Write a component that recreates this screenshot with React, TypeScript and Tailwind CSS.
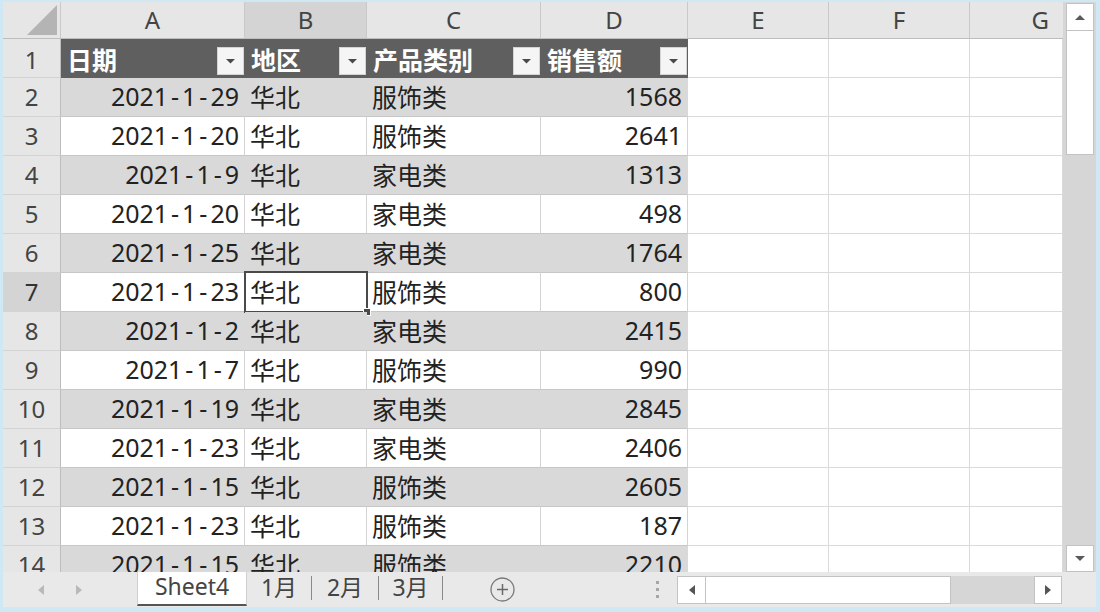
import React from "react";

const rows: [string, string, string, number][] = [
  ["2021-1-29", "华北", "服饰类", 1568],
  ["2021-1-20", "华北", "服饰类", 2641],
  ["2021-1-9", "华北", "家电类", 1313],
  ["2021-1-20", "华北", "家电类", 498],
  ["2021-1-25", "华北", "家电类", 1764],
  ["2021-1-23", "华北", "服饰类", 800],
  ["2021-1-2", "华北", "家电类", 2415],
  ["2021-1-7", "华北", "服饰类", 990],
  ["2021-1-19", "华北", "家电类", 2845],
  ["2021-1-23", "华北", "家电类", 2406],
  ["2021-1-15", "华北", "服饰类", 2605],
  ["2021-1-23", "华北", "服饰类", 187],
  ["2021-1-15", "华北", "服饰类", 2210],
];

function DateText({ s }: { s: string }) {
  const parts = s.split("-");
  return (
    <span className="whitespace-nowrap">
      {parts.map((p, i) => (
        <React.Fragment key={i}>
          {i > 0 && <span className="inline-block w-[14px] text-center">-</span>}
          {p}
        </React.Fragment>
      ))}
    </span>
  );
}

function FilterBtn() {
  return (
    <div className="w-[27px] h-[28px] bg-[#f5f5f5] border border-[#d4d4d4] flex items-center justify-center shrink-0">
      <svg width="11" height="6" viewBox="0 0 11 6">
        <polygon points="1,1 10,1 5.5,5.5" fill="#4a4a4a" />
      </svg>
    </div>
  );
}

function ColHead({ l, sel }: { l: string; sel?: boolean }) {
  return (
    <div
      className={`flex items-center justify-center border-r border-b border-r-[#c9c9c9] border-b-[#bdbdbd] text-[24px] text-[#444] ${
        sel ? "bg-[#d4d4d4]" : "bg-[#e6e6e6]"
      }`}
    >
      {l}
    </div>
  );
}

function RowHead({ n, sel }: { n: number; sel?: boolean }) {
  return (
    <div
      className={`flex items-center justify-center border-r border-b border-r-[#bdbdbd] border-b-[#d3d3d3] text-[24px] pb-[1px] ${
        sel ? "bg-[#d4d4d4] text-[#333]" : "bg-[#e6e6e6] text-[#444]"
      } ${n === 1 ? "pt-[4px]" : ""}`}
    >
      {n}
    </div>
  );
}

function Empty() {
  return <div className="bg-white border-r border-b border-[#dadada]" />;
}

export default function App() {
  return (
    <div className="w-[1100px] h-[612px] bg-[#d0e8f3] pt-[2px] pl-[3px] pr-[4px] pb-[5px] flex flex-col font-['Noto_Sans','Noto_Sans_CJK_SC',sans-serif]">
      {/* grid + vertical scrollbar */}
      <div className="h-[570px] flex">
        <div className="w-[1060px] h-[570px] overflow-hidden">
          <div className="grid grid-cols-[58px_184px_122px_174px_147px_141px_141px_93px] grid-rows-[37px_repeat(14,39px)]">
            {/* corner */}
            <div className="bg-[#e6e6e6] border-r border-b border-r-[#c9c9c9] border-b-[#bdbdbd] relative">
              <svg className="absolute right-[3px] bottom-[3px]" width="30" height="30" viewBox="0 0 30 30">
                <polygon points="30,0 30,30 0,30" fill="#b4b4b4" />
              </svg>
            </div>
            <ColHead l="A" />
            <ColHead l="B" sel />
            <ColHead l="C" />
            <ColHead l="D" />
            <ColHead l="E" />
            <ColHead l="F" />
            <div className="flex items-center justify-end pr-[14px] border-b border-b-[#bdbdbd] bg-[#e6e6e6] text-[24px] text-[#444]">
              G
            </div>

            {/* row 1 table header */}
            <RowHead n={1} />
            {["日期", "地区", "产品类别", "销售额"].map((h) => (
              <div
                key={h}
                className="bg-[#5f5f5f] border-b border-[#5f5f5f] flex items-end justify-between pl-[6px] pr-[1px] pb-[2px]"
              >
                <span className="font-['Noto_Sans_CJK_SC',sans-serif] text-white font-bold text-[25px] leading-none self-center pt-[5px]">
                  {h}
                </span>
                <FilterBtn />
              </div>
            ))}
            <Empty />
            <Empty />
            <Empty />

            {rows.map((r, i) => {
              const n = i + 2;
              const gray = n % 2 === 0;
              const bg = gray ? "bg-[#d9d9d9] border-r-[#d9d9d9]" : "bg-white border-r-[#d3d3d3]";
              const cell = `border-r border-b border-b-[#c6c6c6] ${bg} flex items-center text-[25px] leading-none text-[#222] pb-[2px]`;
              return (
                <React.Fragment key={n}>
                  <RowHead n={n} sel={n === 7} />
                  <div className={`${cell} justify-end pr-[5px]`}>
                    <DateText s={r[0]} />
                  </div>
                  <div className={`${cell} pl-[5px] relative font-['Noto_Sans_CJK_SC',sans-serif]`}>
                    {r[1]}
                    {n === 7 && (
                      <div className="absolute top-[-2px] left-[-1px] right-[-2px] bottom-[-2px] border-2 border-[#4a4a4a]">
                        <div className="absolute right-[-5px] bottom-[-5px] w-[8px] h-[8px] bg-[#4a4a4a] border border-white" />
                      </div>
                    )}
                  </div>
                  <div className={`${cell} pl-[5px] font-['Noto_Sans_CJK_SC',sans-serif]`}>{r[2]}</div>
                  <div className={`${cell} justify-end pr-[5px] border-r-[#d3d3d3]`}>{r[3]}</div>
                  <Empty />
                  <Empty />
                  <Empty />
                </React.Fragment>
              );
            })}
          </div>
        </div>

        {/* vertical scrollbar */}
        <div className="w-[33px] h-[570px] bg-[#d6d6d6] flex flex-col pl-[3px] pr-[2px] pt-[1px]">
          <div className="h-[28px] bg-white border border-[#c3c3c3] flex items-center justify-center">
            <svg width="12" height="7" viewBox="0 0 12 7">
              <polygon points="1,6 11,6 6,1" fill="#5a5a5a" />
            </svg>
          </div>
          <div className="h-[124px] bg-white border border-t-0 border-[#c3c3c3]" />
          <div className="flex-1" />
          <div className="h-[27px] bg-white border border-[#c3c3c3] flex items-center justify-center">
            <svg width="12" height="7" viewBox="0 0 12 7">
              <polygon points="1,1 11,1 6,6" fill="#5a5a5a" />
            </svg>
          </div>
        </div>
      </div>

      {/* tab bar */}
      <div className="h-[35px] bg-[#e9e9e9] flex items-stretch">
        <div className="w-[134px] flex items-center">
          <svg className="ml-[35px]" width="6" height="10" viewBox="0 0 6 10">
            <polygon points="6,0 6,10 0,5" fill="#b9b9b9" />
          </svg>
          <svg className="ml-[32px]" width="6" height="10" viewBox="0 0 6 10">
            <polygon points="0,0 0,10 6,5" fill="#b9b9b9" />
          </svg>
        </div>
        <div className="w-[110px] h-[34px] bg-white border-b-2 border-[#555] border-x border-x-[#cfcfcf] flex items-center justify-center text-[23px] text-[#444] pb-[3px]">
          Sheet4
        </div>
        {[
          ["1月", "w-[65px]"],
          ["2月", "w-[67px]"],
          ["3月", "w-[64px]"],
        ].map(([t, w]) => (
          <div key={t} className={`${w} flex items-center relative`}>
            <span className="flex-1 text-center text-[23px] text-[#444] pb-[5px] font-['Noto_Sans','Noto_Sans_CJK_SC',sans-serif]">
              {t}
            </span>
            <div className="w-px h-[24px] bg-[#8a8a8a] mb-[3px]" />
          </div>
        ))}
        <div className="flex items-center ml-[47px]">
          <svg width="25" height="25" viewBox="0 0 25 25">
            <circle cx="12.5" cy="12.5" r="11.5" fill="none" stroke="#7a7a7a" strokeWidth="1.3" />
            <line x1="7" y1="12.5" x2="18" y2="12.5" stroke="#6a6a6a" strokeWidth="1.5" />
            <line x1="12.5" y1="7" x2="12.5" y2="18" stroke="#6a6a6a" strokeWidth="1.5" />
          </svg>
        </div>
        <div className="ml-[141px] flex flex-col justify-center gap-[4px]">
          <div className="w-[3px] h-[3px] bg-[#a6a6a6]" />
          <div className="w-[3px] h-[3px] bg-[#a6a6a6]" />
          <div className="w-[3px] h-[3px] bg-[#a6a6a6]" />
        </div>
        {/* horizontal scrollbar */}
        <div className="ml-[18px] pt-[4px] pb-[3px] flex">
          <div className="w-[385px] h-[28px] bg-[#d6d6d6] flex">
            <div className="w-[29px] bg-white border border-[#c3c3c3] flex items-center justify-center">
              <svg width="6" height="10" viewBox="0 0 6 10">
                <polygon points="6,0 6,10 0,5" fill="#555" />
              </svg>
            </div>
            <div className="w-[245px] bg-white border border-l-0 border-[#c3c3c3]" />
            <div className="flex-1" />
            <div className="w-[28px] bg-white border border-[#c3c3c3] flex items-center justify-center">
              <svg width="6" height="10" viewBox="0 0 6 10">
                <polygon points="0,0 0,10 6,5" fill="#555" />
              </svg>
            </div>
          </div>
        </div>
      </div>
    </div>
  );
}
